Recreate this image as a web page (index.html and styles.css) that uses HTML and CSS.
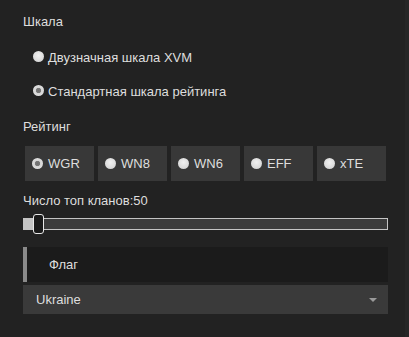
FILE: index.html
```html
<!DOCTYPE html>
<html lang="ru">
<head>
<meta charset="utf-8">
<link rel="stylesheet" href="styles.css">
</head>
<body>
<div class="page">
  <main class="panel">
    <div class="title">Шкала</div>
    <div class="radio-list">
      <label class="row row-first"><span class="radio"></span><span>Двузначная шкала XVM</span></label>
      <label class="row row-second"><span class="radio checked"></span><span>Стандартная шкала рейтинга</span></label>
    </div>
    <div class="title title-rating">Рейтинг</div>
    <div class="buttons">
      <div class="btn"><span class="radio checked"></span><span>WGR</span></div>
      <div class="btn"><span class="radio"></span><span>WN8</span></div>
      <div class="btn"><span class="radio"></span><span>WN6</span></div>
      <div class="btn"><span class="radio"></span><span>EFF</span></div>
      <div class="btn"><span class="radio"></span><span>xTE</span></div>
    </div>
    <div class="title title-count">Число топ кланов:50</div>
    <div class="slider">
      <div class="track">
        <div class="fill"></div>
        <div class="handle"></div>
      </div>
    </div>
    <div class="flag">Флаг</div>
    <div class="select">
      <span>Ukraine</span>
      <span class="arrow"></span>
    </div>
  </main>
  <div class="edge"></div>
</div>
</body>
</html>
```

FILE: styles.css
```css
html, body {
  margin: 0;
  padding: 0;
  background: #222222;
}
body {
  font-family: "Liberation Sans", Arial, sans-serif;
  font-size: 13px;
  line-height: 16px;
  color: #dedede;
}
.page {
  display: flex;
  height: 337px;
}
.panel {
  flex: 1;
  padding: 14px 17px 0 23px;
}
.edge {
  width: 4px;
  background: #262626;
}
.title {
  height: 16px;
}
.radio-list {
  padding-left: 10px;
}
.row {
  display: flex;
  align-items: center;
  gap: 4px;
  height: 16px;
}
.row .radio {
  margin-bottom: 3px;
}
.row-first {
  margin-top: 20px;
}
.row-second {
  margin-top: 18px;
}
.title-rating {
  margin-top: 19px;
}
.radio {
  flex: none;
  width: 11px;
  height: 11px;
  border-radius: 50%;
  background: radial-gradient(circle at 50% 40%, #f0f0f0 0%, #dcdcdc 60%, #c4c4c4 100%);
}
.radio.checked {
  background: radial-gradient(circle at 50% 50%, #6e6e6e 0, #7a7a7a 2.3px, #d6d6d6 3px, #e4e4e4 100%);
}
.buttons {
  display: flex;
  gap: 4px;
  margin: 11px 2px 0;
}
.btn {
  width: 69px;
  height: 35px;
  box-sizing: border-box;
  padding-left: 7px;
  display: flex;
  align-items: center;
  gap: 5px;
  background: #383838;
}
.title-count {
  margin-top: 12px;
}
.slider {
  margin-top: 5px;
  height: 20px;
  display: flex;
  align-items: center;
}
.track {
  position: relative;
  flex: 1;
  height: 12px;
  box-sizing: border-box;
  border: 1px solid #c4c4c4;
  background: #3b3b3b;
}
.fill {
  width: 10px;
  height: 100%;
  background: #c4c4c4;
}
.handle {
  position: absolute;
  left: 9px;
  top: -5px;
  width: 11px;
  height: 20px;
  box-sizing: border-box;
  border: 1px solid #e8e8e8;
  border-radius: 3px;
  background: #1a1a1a;
}
.flag {
  margin-top: 13px;
  height: 35px;
  box-sizing: border-box;
  padding: 10px 0 9px 22px;
  border-left: 4px solid #8a8a8a;
  background: #1b1b1b;
}
.select {
  margin-top: 3px;
  height: 29px;
  box-sizing: border-box;
  padding: 7px 11px 6px 13px;
  display: flex;
  justify-content: space-between;
  align-items: center;
  background: #3a3a3a;
}
.arrow {
  width: 0;
  height: 0;
  border-left: 4px solid transparent;
  border-right: 4px solid transparent;
  border-top: 4px solid #9a9a9a;
}
```
